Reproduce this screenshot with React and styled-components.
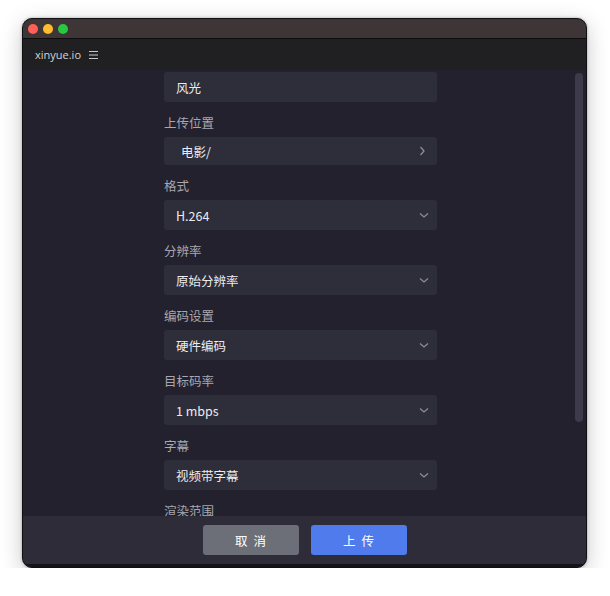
import React from 'react';
import styled, { createGlobalStyle } from 'styled-components';

const GlobalStyle = createGlobalStyle`
  html, body {
    margin: 0;
    padding: 0;
    background: #ffffff;
  }
  body {
    font-family: 'Noto Sans CJK SC', 'Noto Sans', sans-serif;
  }
`;

const Window = styled.div`
  display: flex;
  flex-direction: column;
  width: 565px;
  height: 550px;
  margin: 18px 0 0 22px;

  background: #23212d;
  border: 1px solid #111014;
  border-radius: 10px;
  overflow: hidden;
  box-shadow: 0 6px 22px rgba(0, 0, 0, 0.22), 0 0 3px rgba(0, 0, 0, 0.3);
  box-sizing: border-box;
`;

const TitleBar = styled.div`
  display: flex;
  align-items: center;
  gap: 5px;
  height: 19px;
  padding-left: 5px;

  background: #3d3536;
  border-bottom: 1px solid #0c0b0d;
  flex-shrink: 0;
`;

const Light = styled.span`
  width: 10px;
  height: 10px;
  border-radius: 50%;
  background: ${({ color }) => color};
`;

const Header = styled.div`
  display: flex;
  align-items: center;
  gap: 8px;
  height: 31px;
  padding-left: 12px;

  background: #202022;
  color: #d4d4d8;
  font-family: 'Open Sans', 'Noto Sans', sans-serif;
  font-size: 11px;
  flex-shrink: 0;
`;

const Body = styled.div`
  display: flex;
  flex: 1;
  min-height: 0;
  overflow: hidden;
`;

const ScrollArea = styled.div`
  display: flex;
  justify-content: center;
  flex: 1;
  padding-left: 6px;
  overflow: hidden;
`;

const Form = styled.div`
  display: flex;
  flex-direction: column;
  width: 273px;
  padding-top: 2px;
`;

const Label = styled.div`
  margin: 11px 0 4px;
  line-height: 20px;
  font-size: 12.5px;
  color: #a8a7b0;
`;

const Field = styled.div`
  display: flex;
  align-items: center;
  justify-content: space-between;
  flex-shrink: 0;
  height: ${({ short }) => (short ? 28 : 30)}px;
  padding: 0 ${({ short }) => (short ? 9 : 7)}px 0 ${({ inset }) => (inset ? 17 : 12)}px;

  background: #2e2d3a;
  border-radius: 3px;
  color: #ececf0;
  font-size: 12.5px;
  box-sizing: border-box;
`;

const Chevron = styled.svg`
  width: 12px;
  height: 12px;
  stroke: #8d8c98;
  fill: none;
  stroke-width: 1.3;
`;

const ScrollTrack = styled.div`
  width: 14px;
  padding: 3px 3px 0 3px;
  box-sizing: border-box;
  flex-shrink: 0;
`;

const ScrollThumb = styled.div`
  width: 8px;
  height: 349px;
  border-radius: 4px;
  background: #3d3b4b;
`;

const Footer = styled.div`
  display: flex;
  justify-content: center;
  align-items: center;
  gap: 12px;
  height: 48px;

  background: #2d2c38;
  border-bottom: 3px solid #141318;
  flex-shrink: 0;
`;

const Button = styled.button`
  width: 96px;
  height: 30px;
  padding: 0 0 0 6px;
  border: none;
  border-radius: 3px;

  background: ${({ primary }) => (primary ? '#507bec' : '#6c6f78')};
  color: #ffffff;
  font-family: 'Noto Sans CJK SC', sans-serif;
  font-size: 12.5px;
  letter-spacing: 6px;
`;

const DownIcon = () => (
  <Chevron viewBox="0 0 12 12">
    <path d="M2 4.5 L6 8 L10 4.5" />
  </Chevron>
);

const RightIcon = () => (
  <Chevron viewBox="0 0 12 12">
    <path d="M4.5 2 L8 6 L4.5 10" />
  </Chevron>
);

const MenuIcon = () => (
  <svg width="9" height="8" viewBox="0 0 9 8" stroke="#c8c8cc" strokeWidth="1">
    <path d="M0 0.5 H9 M0 4 H9 M0 7.5 H9" />
  </svg>
);

const selects = [
  { label: '格式', value: 'H.264' },
  { label: '分辨率', value: '原始分辨率' },
  { label: '编码设置', value: '硬件编码' },
  { label: '目标码率', value: '1 mbps' },
  { label: '字幕', value: '视频带字幕' },
];

const App = () => (
  <>
    <GlobalStyle />
    <Window>
      <TitleBar>
        <Light color="#fe5f57" />
        <Light color="#febc2e" />
        <Light color="#28c840" />
      </TitleBar>
      <Header>
        xinyue.io
        <MenuIcon />
      </Header>
      <Body>
        <ScrollArea>
          <Form>
            <Field>风光</Field>
            <Label>上传位置</Label>
            <Field short inset>
              电影/
              <RightIcon />
            </Field>
            {selects.map((item) => (
              <React.Fragment key={item.label}>
                <Label>{item.label}</Label>
                <Field>
                  {item.value}
                  <DownIcon />
                </Field>
              </React.Fragment>
            ))}
            <Label>渲染范围</Label>
          </Form>
        </ScrollArea>
        <ScrollTrack>
          <ScrollThumb />
        </ScrollTrack>
      </Body>
      <Footer>
        <Button>取消</Button>
        <Button primary>上传</Button>
      </Footer>
    </Window>
  </>
);

export default App;
